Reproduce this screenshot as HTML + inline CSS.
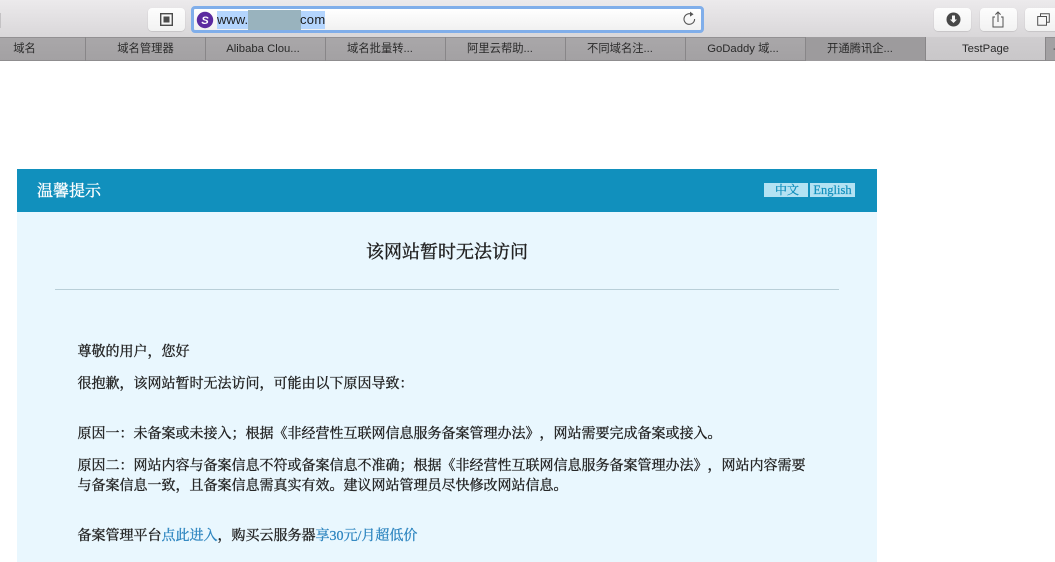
<!DOCTYPE html>
<html><head><meta charset="utf-8">
<style>
*{box-sizing:border-box}
html,body{margin:0;padding:0;width:1055px;height:562px;overflow:hidden;background:#fff}
body{position:relative;font-family:"Liberation Serif","Noto Serif CJK SC",serif;text-spacing-trim:space-all}
.a{position:absolute;white-space:nowrap}
#bar{left:0;top:0;width:1055px;height:37px;background:linear-gradient(#eceaec,#d9d7d9)}
.btn{position:absolute;top:8px;height:23px;width:37px;background:linear-gradient(#fdfdfd,#f2f2f2);border-radius:4px;box-shadow:0 0.5px 1px #b5b3b5}
#url{left:191px;top:6px;width:513px;height:27px;border-radius:4px;border:3px solid #80aeea;background:linear-gradient(#fff,#f1f1f1)}
#tabs{left:0;top:37px;width:1055px;height:24px;background:linear-gradient(#a9a7a9,#a3a1a3);border-top:1px solid #929092;border-bottom:1px solid #8f8d8f}
.t{position:absolute;top:37px;height:24px;border-right:1px solid #888688;text-align:center;font:11.3px/25px "Liberation Sans","Noto Sans CJK SC",sans-serif;color:#2a2a2a;white-space:nowrap;overflow:hidden}
.p{left:77.5px;font-size:14px;line-height:22px;color:#222;-webkit-text-stroke:.35px #222;filter:blur(.25px)}
</style></head><body>
<div class="a" id="bar"></div>
<div class="a" style="left:0;top:13px;width:1px;height:15px;background:#c4c2c4"></div>
<div class="btn" style="left:148px"></div>
<svg class="a" style="left:160px;top:13px" width="13" height="13" viewBox="0 0 13 13"><rect x="0.7" y="0.7" width="11.6" height="11.6" fill="none" stroke="#4c4c4c" stroke-width="1.4"/><rect x="3.5" y="3.5" width="6" height="6" fill="#4c4c4c"/></svg>
<div class="a" id="url"></div>
<svg class="a" style="left:196px;top:11px" width="18" height="18" viewBox="0 0 18 18"><circle cx="9" cy="9" r="8.2" fill="#5b2aa0"/><text x="9" y="13" text-anchor="middle" fill="#fff" font-size="11" font-weight="bold" font-style="italic" font-family="Liberation Sans,sans-serif">S</text></svg>
<div class="a" style="left:217px;top:11px;width:108px;height:18px;background:#b4d5fe"></div>
<div class="a" style="left:248px;top:10px;width:53px;height:20px;background:#99b3be"></div>
<div class="a" style="left:217px;top:11px;font:13px/18px 'Liberation Sans',sans-serif;color:#1c1c1c">www.</div>
<div class="a" style="left:300px;top:11px;font:13px/18px 'Liberation Sans',sans-serif;color:#1c1c1c;letter-spacing:.3px">com</div>
<svg class="a" style="left:682px;top:11px" width="15" height="16" viewBox="0 0 15 16"><path d="M9.5 3.2A5.3 5.3 0 1 0 12.6 8" fill="none" stroke="#555" stroke-width="1.1"/><path d="M8 0.6L11.6 3.2L8 5.6Z" fill="#555"/></svg>
<div class="btn" style="left:934px"></div>
<svg class="a" style="left:946px;top:12px" width="15" height="15" viewBox="0 0 15 15"><circle cx="7.5" cy="7.5" r="7" fill="#474747"/><path d="M6 3.5H9V7.5H11L7.5 11L4 7.5H6Z" fill="#f6f6f6"/></svg>
<div class="btn" style="left:980px"></div>
<svg class="a" style="left:991px;top:11px" width="14" height="17" viewBox="0 0 14 17"><path d="M4 6H2V16H12V6H10M7 11V1.2M4.4 3.6L7 1L9.6 3.6" fill="none" stroke="#515151" stroke-width="1"/></svg>
<div class="btn" style="left:1025px;width:37px"></div>
<svg class="a" style="left:1037px;top:13px" width="13" height="13" viewBox="0 0 13 13"><path d="M3.5 3.5V0.7H12.3V9.3H9.5M0.7 3.5H9.5V12.3H0.7Z" fill="none" stroke="#515151" stroke-width="1"/></svg>
<div class="a" id="tabs"></div>
<div class="t" style="left:0;width:86px;padding-right:36px">域名</div>
<div class="t" style="left:86px;width:120px">域名管理器</div>
<div class="t" style="left:206px;width:120px;padding-right:5px">Alibaba Clou...</div>
<div class="t" style="left:326px;width:120px;padding-right:11px">域名批量转...</div>
<div class="t" style="left:446px;width:120px;padding-right:11px">阿里云帮助...</div>
<div class="t" style="left:566px;width:120px;padding-right:11px">不同域名注...</div>
<div class="t" style="left:686px;width:120px;padding-right:5px">GoDaddy 域...</div>
<div class="t" style="left:806px;width:120px;background:#9d9b9d;padding-right:11px">开通腾讯企...</div>
<div class="t" style="left:926px;width:120px;background:linear-gradient(#cfcdcf,#c9c7c9);border-bottom:1px solid #8f8d8f">TestPage</div>
<div class="a" style="left:1046px;top:38px;width:9px;height:22px;background:#a3a1a3;font:12px/23px 'Liberation Sans',sans-serif;color:#333;padding-left:7px;overflow:hidden">+</div>

<div class="a" style="left:17px;top:169px;width:860px;height:393px;background:#e9f7fe"></div>
<div class="a" style="left:17px;top:169px;width:860px;height:43px;background:#1190bd"></div>
<div class="a" style="left:37px;top:179.5px;font-size:16px;line-height:24px;color:#fff;-webkit-text-stroke:.35px #fff">温馨提示</div>
<div class="a" style="left:764px;top:183px;width:44px;height:14px;background:#b3e2f3"></div>
<div class="a" style="left:775px;top:183px;color:#1190bd;font-size:12px;line-height:15px;-webkit-text-stroke:.3px #1190bd">中文</div>
<div class="a" style="left:810px;top:183px;width:45px;height:14px;background:#b3e2f3;color:#1190bd;font-size:12.5px;line-height:14px;text-align:center;-webkit-text-stroke:.2px #1190bd">English</div>
<div class="a" style="left:17px;width:860px;top:239px;text-align:center;font-size:18px;line-height:27px;color:#222;-webkit-text-stroke:.4px #222;filter:blur(.25px)">该网站暂时无法访问</div>
<div class="a" style="left:55px;top:289px;width:784px;height:1px;background:#b9cfd8"></div>
<div class="a p" style="top:342px">尊敬的用户，您好</div>
<div class="a p" style="top:374px">很抱歉，该网站暂时无法访问，可能由以下原因导致：</div>
<div class="a p" style="top:424px">原因一：未备案或未接入；根据《非经营性互联网信息服务备案管理办法》，网站需要完成备案或接入。</div>
<div class="a p" style="top:456px">原因二：网站内容与备案信息不符或备案信息不准确；根据《非经营性互联网信息服务备案管理办法》，网站内容需要</div>
<div class="a p" style="top:476px">与备案信息一致，且备案信息需真实有效。建议网站管理员尽快修改网站信息。</div>
<div class="a p" style="top:526px">备案管理平台<span style="color:#2f86c0;-webkit-text-stroke:.3px #2f86c0">点此进入</span>，购买云服务器<span style="color:#2f86c0;-webkit-text-stroke:.3px #2f86c0">享30元/月超低价</span></div>
</body></html>
